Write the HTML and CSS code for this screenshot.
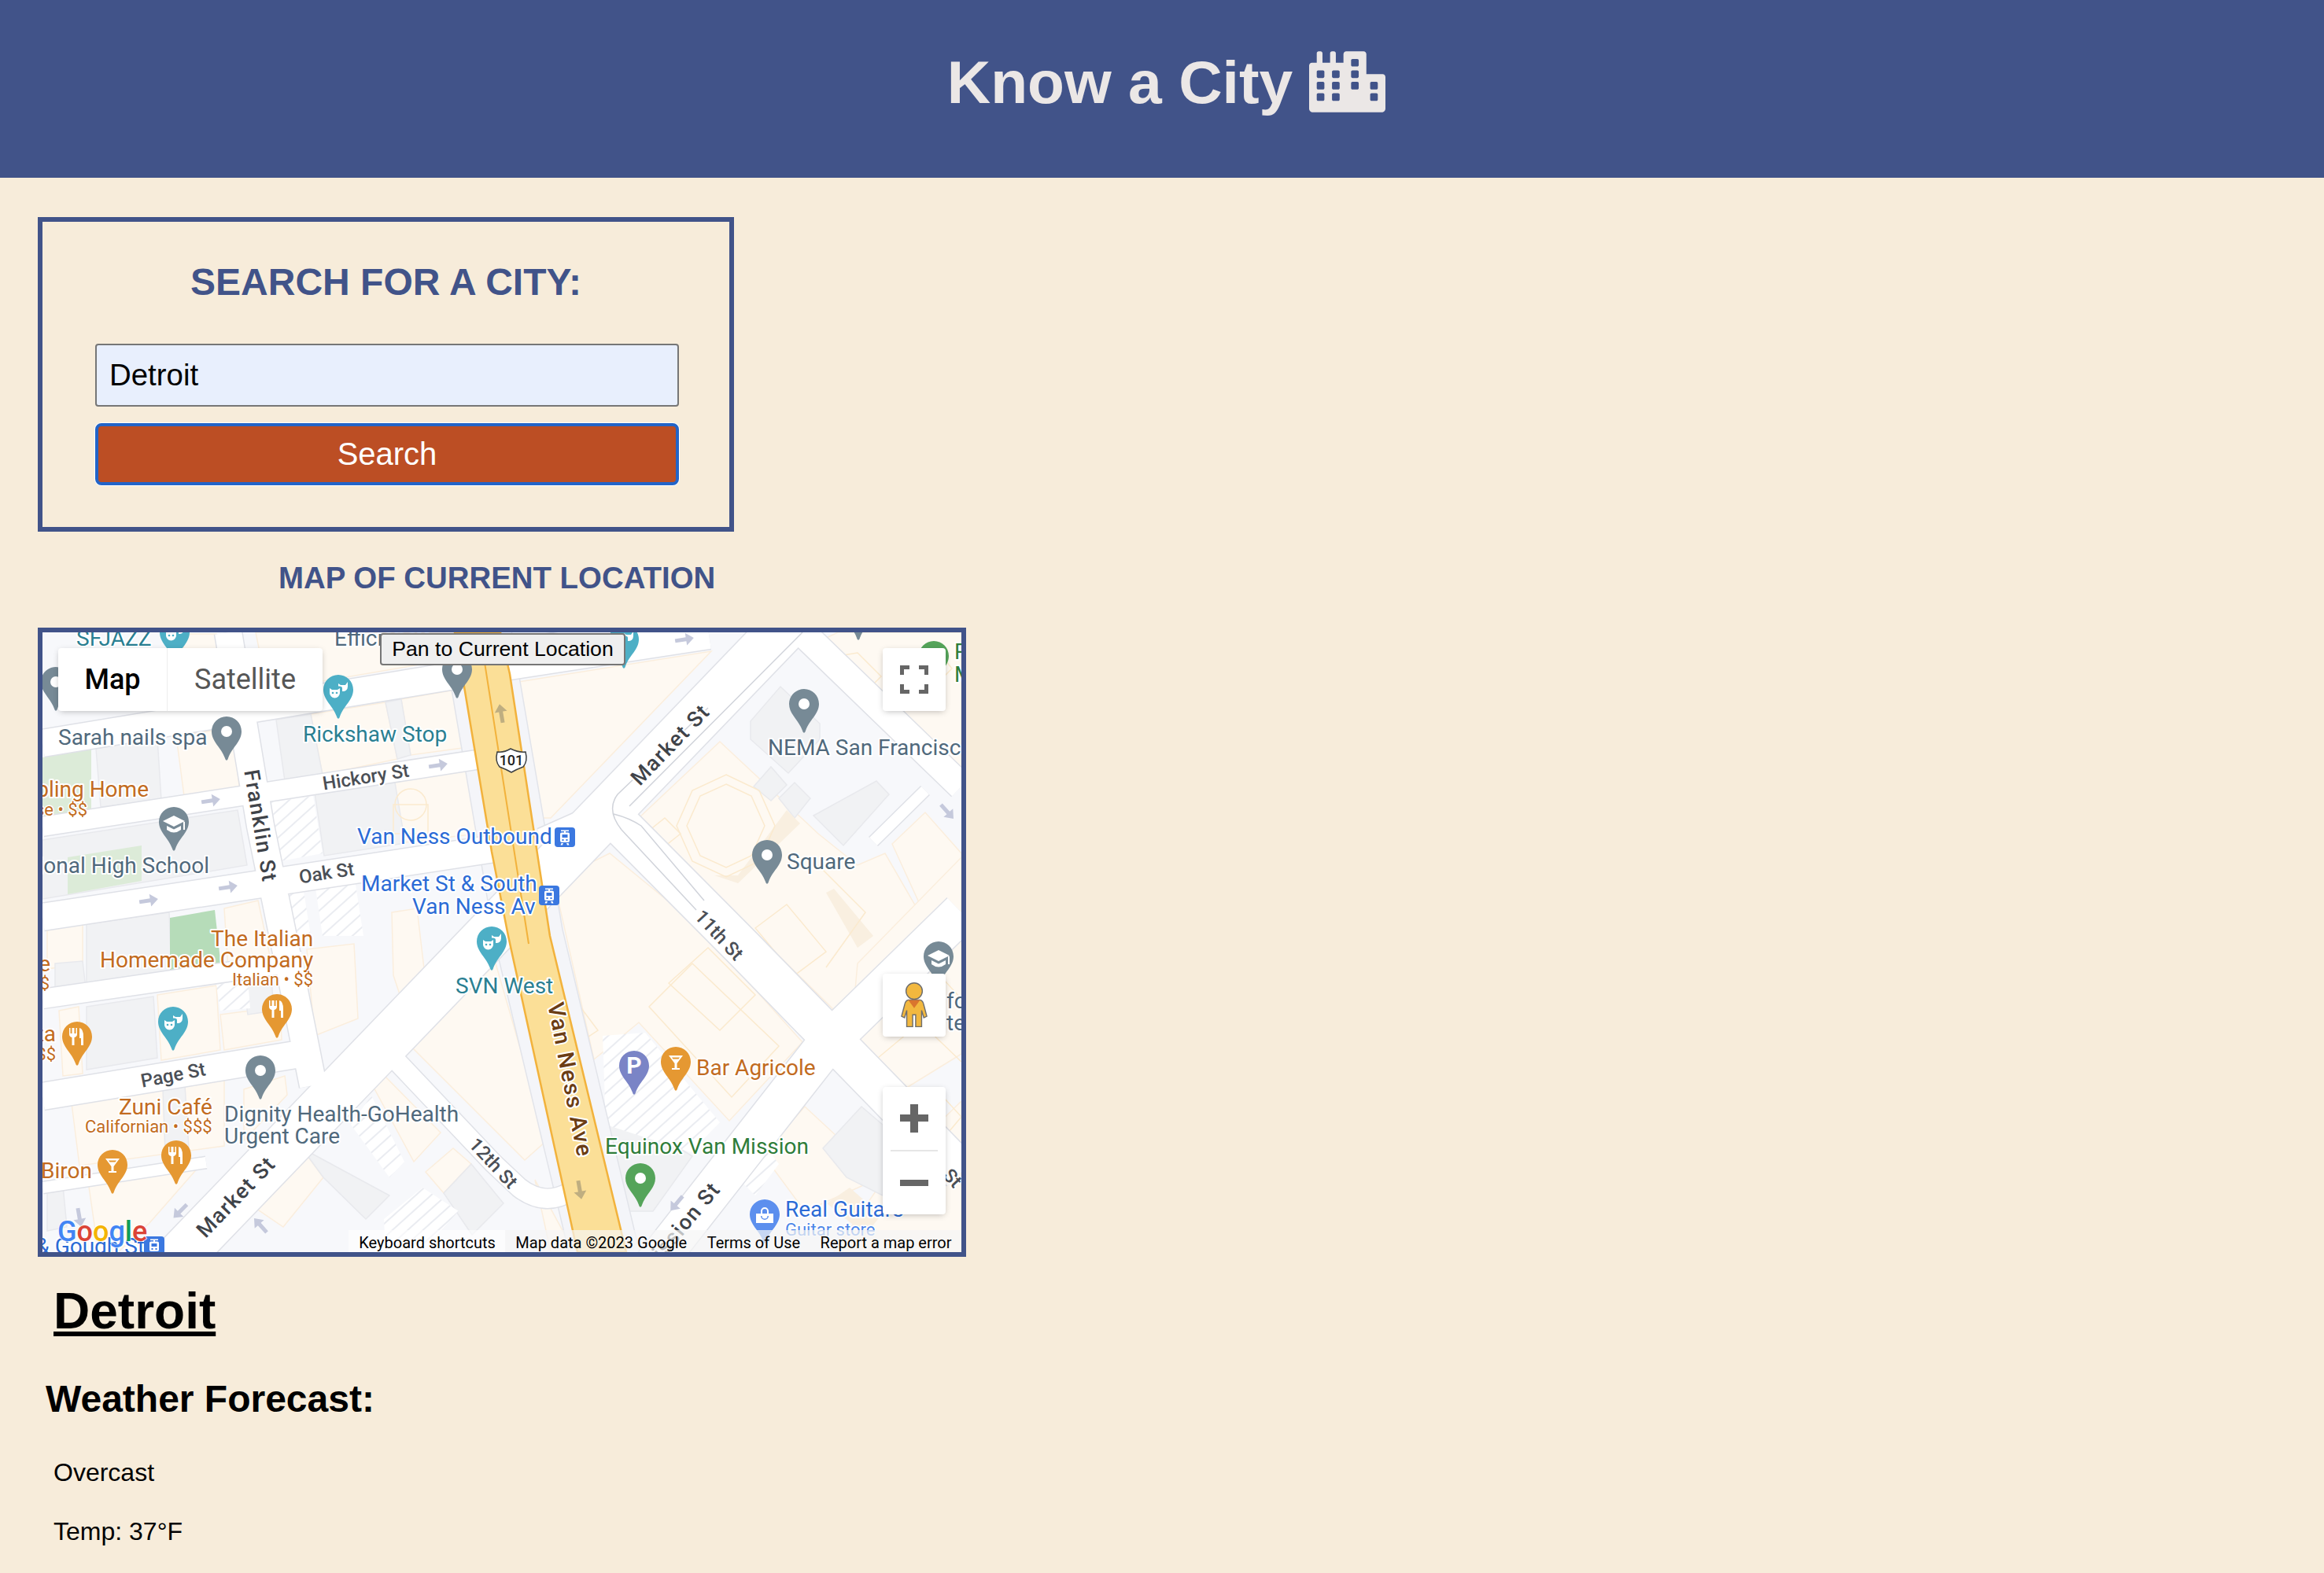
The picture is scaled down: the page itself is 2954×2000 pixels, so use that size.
FILE: index.html
```html
<!DOCTYPE html>
<html lang="en">
<head>
<meta charset="utf-8">
<title>Know a City</title>
<link rel="stylesheet" href="styles.css">
</head>
<body>
<header class="site-header">
  <h1 class="site-title">Know a City</h1>
  <svg class="city-icon" viewBox="0 0 640 512" aria-hidden="true"><path d="M616 192H480V24c0-13.26-10.74-24-24-24H312c-13.26 0-24 10.74-24 24v72h-64V16c0-8.84-7.16-16-16-16h-16c-8.84 0-16 7.16-16 16v80h-64V16c0-8.84-7.16-16-16-16H80c-8.84 0-16 7.16-16 16v80H24c-13.26 0-24 10.74-24 24v360c0 17.67 14.33 32 32 32h576c17.67 0 32-14.33 32-32V216c0-13.26-10.75-24-24-24zM128 404c0 6.63-5.37 12-12 12H76c-6.63 0-12-5.37-12-12v-40c0-6.63 5.37-12 12-12h40c6.63 0 12 5.37 12 12v40zm0-96c0 6.63-5.37 12-12 12H76c-6.63 0-12-5.37-12-12v-40c0-6.63 5.37-12 12-12h40c6.63 0 12 5.37 12 12v40zm0-96c0 6.63-5.37 12-12 12H76c-6.63 0-12-5.37-12-12v-40c0-6.63 5.37-12 12-12h40c6.63 0 12 5.37 12 12v40zm128 192c0 6.63-5.37 12-12 12h-40c-6.63 0-12-5.37-12-12v-40c0-6.63 5.37-12 12-12h40c6.63 0 12 5.37 12 12v40zm0-96c0 6.63-5.37 12-12 12h-40c-6.63 0-12-5.37-12-12v-40c0-6.63 5.37-12 12-12h40c6.63 0 12 5.37 12 12v40zm0-96c0 6.63-5.37 12-12 12h-40c-6.63 0-12-5.37-12-12v-40c0-6.63 5.37-12 12-12h40c6.63 0 12 5.37 12 12v40zm160 96c0 6.63-5.37 12-12 12h-40c-6.63 0-12-5.37-12-12v-40c0-6.63 5.37-12 12-12h40c6.63 0 12 5.37 12 12v40zm0-96c0 6.63-5.37 12-12 12h-40c-6.63 0-12-5.37-12-12v-40c0-6.63 5.37-12 12-12h40c6.63 0 12 5.37 12 12v40zm0-96c0 6.63-5.37 12-12 12h-40c-6.63 0-12-5.37-12-12V76c0-6.63 5.37-12 12-12h40c6.63 0 12 5.37 12 12v40zm160 288c0 6.63-5.37 12-12 12h-40c-6.63 0-12-5.37-12-12v-40c0-6.63 5.37-12 12-12h40c6.63 0 12 5.37 12 12v40zm0-96c0 6.63-5.37 12-12 12h-40c-6.63 0-12-5.37-12-12v-40c0-6.63 5.37-12 12-12h40c6.63 0 12 5.37 12 12v40z"/></svg>
</header>

<main class="content">
  <section class="search-box">
    <h2 class="search-title">SEARCH FOR A CITY:</h2>
    <form class="search-form">
      <input class="search-input" type="text" value="Detroit">
      <button class="search-button" type="button">Search</button>
    </form>
  </section>

  <h3 class="map-title">MAP OF CURRENT LOCATION</h3>

  <div class="map">
    <svg class="map-canvas" viewBox="54 804 1168 788" aria-label="Map of San Francisco around Van Ness Ave">
      <defs>
        <pattern id="stripes" width="13" height="13" patternUnits="userSpaceOnUse" patternTransform="rotate(-42)">
          <rect width="13" height="13" fill="#ffffff"/>
          <rect width="13" height="2" fill="#eaecf1"/>
        </pattern>
        <path id="pin-shape" d="M20 1C9.5 1 1 9.5 1 20C1 33 13 40 18 54C19 57.500 21 57.500 22 54C27 40 39 33 39 20C39 9.500 30.500 1 20 1Z"/>
        <g id="icon-dot"><circle cx="20" cy="20" r="7" fill="#fff"/></g>
        <g id="icon-cap" fill="#fff">
          <path d="M6 19L20 12L34 19L20 26Z"/>
          <path d="M11 25V30Q20 37 29 30V25L20 29.500Z"/>
          <rect x="32" y="20" width="2" height="10"/>
        </g>
        <g id="icon-masks">
          <path class="mask-face" d="M9 18L12 20H19L22 18V24A6.500 6.500 0 0 1 9 24Z"/>
          <path class="mask-face" d="M20 12L23 14H29L32 10V16A6 6 0 0 1 25 22V18Q25 15 20 15.500Z"/>
          <circle class="mask-eye" cx="13" cy="24" r="1.300"/>
          <circle class="mask-eye" cx="18" cy="24" r="1.300"/>
        </g>
        <g id="icon-fork" fill="#fff">
          <path d="M10 9V17Q10 20 13.500 21V31H16.500V21Q20 20 20 17V9H18.500V16H16.500V9H13.500V16H11.500V9Z"/>
          <path d="M23 9Q28 10 28 20V31H25V22H23Z"/>
        </g>
        <g id="icon-glass" fill="#fff">
          <path fill-rule="evenodd" d="M11 12H29L21.500 22V28H25V30H15V28H18.500V22ZM15 14.500L16.500 16.500H23.500L25 14.500Z"/>
        </g>
        <g id="icon-bag" fill="#fff">
          <path fill-rule="evenodd" d="M15 19V16A5 5 0 0 1 25 16V19H31V31H9V19ZM17 19H23V16A3 3 0 0 0 17 16ZM15 22A5 5 0 0 0 25 22H23.500A3.500 3.500 0 0 1 16.500 22Z"/>
        </g>
        <g id="arrow"><path d="M-12 -2.500H2V-8L12 0L2 8V2.500H-12Z"/></g>
        <g id="transit">
          <rect width="26" height="25" rx="4" fill="#3b78e0"/>
          <path fill="#fff" fill-rule="evenodd" d="M8 3.500H18V5H14V6.500H17Q19 6.500 19 8.500V17Q19 19 17 19H9Q7 19 7 17V8.500Q7 6.500 9 6.500H12V5H8ZM9.500 9V13H16.500V9ZM9.500 15V17H11.500V15ZM14.500 15V17H16.500V15ZM8.500 20H11L10 22.500H7.500ZM15 20H17.500L18.500 22.500H16Z"/>
        </g>
      </defs>

      <rect class="ground" x="54" y="804" width="1168" height="788"/>

      <!-- city blocks and buildings -->
      <g class="bldg-cream">
        <polygon points="230,806 275,806 280,860 240,860"/>
        <polygon points="325,804 590,804 598,834 340,878"/>
        <polygon points="224,936 297,925 304,1000 234,1012"/>
        <polygon points="395,908 490,893 505,965 410,985"/>
        <polygon points="510,889 590,875 595,950 522,960"/>
        <polygon points="490,992 605,975 607,1060 505,1072"/>
        <polygon points="60,1182 105,1175 105,1225 60,1232"/>
        <polygon points="285,1155 328,1145 345,1225 290,1232"/>
        <polygon points="75,1285 100,1280 105,1365 80,1368"/>
        <polygon points="200,1265 275,1253 280,1335 205,1348"/>
        <polygon points="280,1290 356,1280 358,1322 285,1335"/>
        <polygon points="390,1207 450,1200 455,1295 400,1317"/>
        <polygon points="498,1160 530,1155 540,1240 510,1270 500,1240"/>
        <polygon points="90,1395 285,1372 285,1457 101,1482"/>
        <polygon points="310,1385 362,1368 365,1392 310,1450"/>
        <polygon points="111,1495 254,1482 190,1555 150,1592 125,1592"/>
        <polygon points="472,1377 484,1363 560,1440 526,1477"/>
        <polygon points="319,1532 384,1460 411,1497 360,1560"/>
        <polygon points="541,1490 576,1460 599,1480 564,1517"/>
        <polygon points="522,1330 630,1225 695,1450 667,1475"/>
        <polygon points="659,867 904,828 700,1040 686,1040"/>
        <polygon points="704,1120 775,1085 885,1175 1020,1325 927,1425 812,1300 755,1347"/>
        <polygon points="812,1040 915,943 1040,1060 1090,1100 1125,1085 1180,1180 1061,1285"/>
        <polygon points="1134,1073 1176,1033 1222,1085 1222,1145 1183,1180"/>
        <polygon points="1038,817 1065,804 1222,804 1222,985 1160,920 1111,890"/>
        <polygon points="1090,1225 1222,1090 1222,1340 1141,1390 1080,1335"/>
        <polygon points="969,1467 1023,1407 1120,1497 1023,1540"/>
        <polygon points="1130,1490 1222,1400 1222,1592 1060,1592"/>
        <polygon points="700,1592 680,1500 730,1592"/>
      </g>
      <g class="bldg-gray">
        <polygon points="122,952 200,939 205,1017 128,1026"/>
        <polygon points="351,915 395,908 410,985 362,993"/>
        <polygon points="490,893 510,889 522,960 505,965"/>
        <polygon points="400,1008 502,995 515,1072 412,1088"/>
        <polygon points="54,1068 302,1030 314,1100 54,1143"/>
        <polygon points="70,1225 105,1222 110,1265 70,1270"/>
        <polygon points="110,1175 215,1160 218,1240 110,1250"/>
        <polygon points="110,1280 195,1267 200,1345 110,1360"/>
        <polygon points="310,1255 345,1245 348,1285 315,1290"/>
        <polygon points="207,1385 235,1380 240,1460 210,1465"/>
        <polygon points="60,1510 80,1508 85,1560 60,1565"/>
        <polygon points="384,1460 495,1520 465,1550 411,1497"/>
        <polygon points="564,1517 599,1480 640,1530 600,1570"/>
        <polygon points="772,1430 810,1427 880,1470 830,1540 790,1540"/>
        <polygon points="954,917 992,873 1042,920 1042,940 1002,983 954,940"/>
        <polygon points="1114,993 1130,1010 1072,1075 1034,1037"/>
        <polygon points="958,1000 980,975 1000,998 980,1018"/>
        <polygon points="990,1015 1010,995 1030,1015 1010,1040"/>
        <polygon points="1046,1460 1095,1407 1122,1430 1122,1520 1076,1497"/>
      </g>
      <g class="bldg-tan">
        <polygon points="1000,1030 1017,1047 938,1123 908,1113 938,1113"/>
        <polygon points="1050,1135 1060,1130 1110,1190 1090,1205"/>
        <polygon points="1051,1530 1080,1510 1120,1545 1100,1570"/>
      </g>
      <g class="park-pale">
        <polygon points="54,963 116,953 116,1029 54,1039"/>
        <polygon points="86,1090 180,1075 180,1120 86,1137"/>
      </g>
      <g class="park">
        <polygon points="216,1167 273,1157 281,1230 216,1241"/>
      </g>
      <g class="stripes">
        <polygon points="345,1020 398,1012 410,1085 356,1095"/>
        <polygon points="362,1130 385,1127 395,1190 372,1190"/>
        <polygon points="400,1122 450,1112 462,1190 410,1190"/>
        <polygon points="275,1252 315,1245 318,1282 280,1285"/>
        <polygon points="446,1430 472,1393 514,1477 495,1497"/>
        <polygon points="488,1550 537,1510 583,1540 537,1590 490,1590"/>
        <polygon points="766,1317 820,1313 915,1427 878,1465 770,1430"/>
        <polygon points="960,1440 990,1480 960,1520 930,1490"/>
      </g>
      <g class="outline">
        <polygon points="923,985 965,1005 985,1050 965,1095 923,1115 880,1095 860,1050 880,1005"/>
        <polygon points="923,997 955,1012 972,1050 955,1088 923,1103 890,1088 873,1050 890,1012"/>
        <polygon points="825,1280 880,1225 990,1330 930,1395"/>
        <polygon points="850,1250 900,1205 960,1265 915,1310"/>
        <polyline points="1040,1100 1100,1160 1050,1230"/>
        <polyline points="1140,1290 1190,1235 1222,1270"/>
        <polyline points="1110,1350 1170,1300 1222,1350"/>
        <polygon points="1060,835 1090,830 1120,860 1100,880"/>
        <polygon points="960,1180 1000,1150 1050,1210 1010,1240"/>
        <polygon points="700,1290 730,1270 760,1310 730,1330"/>
        <polygon points="820,1060 845,1040 865,1060 840,1080"/>
        <polygon points="1160,850 1190,825 1210,850 1180,880"/>
        <polygon points="1150,1420 1190,1385 1222,1420 1180,1470"/>
        <polygon points="500,1023 544,1023 544,1060 500,1060"/>
        <circle cx="522" cy="1023" r="20"/>
      </g>

      <!-- Van Ness sidewalks -->
      <path class="van-walk-edge" d="M606 804L672 1190L768 1592"/>
      <path class="van-walk" d="M606 804L672 1190L768 1592"/>

      <!-- streets -->
      <g class="casing">
        <path class="w14" d="M54 1510L262 1478M1110 1070L1176 1005"/>
        <path class="w24" d="M54 1051L612 965M54 1270L385 1222M505 1350L627 1479L660 1510Q692 1535 725 1515"/>
        <path class="w34" d="M54 945L590 857M54 1166L635 1078M690 1070L780 1030M54 1394L400 1337M290 804L331 1050L372 1250L398 1380M1005 790L1222 1000"/>
        <path class="w50" d="M640 840L900 800M790 1050L946 1207L1222 1490M830 1610L1053 1325L1222 1160"/>
        <path class="w60" d="M200 1627L1050 743"/>
      </g>
      <g class="road">
        <path class="w14" d="M54 1510L262 1478M1110 1070L1176 1005"/>
        <path class="w24" d="M54 1051L612 965M54 1270L385 1222M505 1350L627 1479L660 1510Q692 1535 725 1515"/>
        <path class="w34" d="M54 945L590 857M54 1166L635 1078M690 1070L780 1030M54 1394L400 1337M290 804L331 1050L372 1250L398 1380M1005 790L1222 1000"/>
        <path class="w50" d="M640 840L900 800M790 1050L946 1207L1222 1490M830 1610L1053 1325L1222 1160"/>
        <path class="w60" d="M200 1627L1050 743"/>
      </g>
      <path class="tram" d="M900 900L785 1010Q770 1030 790 1055L885 1157M780 1035Q800 1040 815 1050L895 1145M1020 804L800 1025"/>

      <!-- Van Ness Ave -->
      <polygon class="highway" points="578,804 590,873 625,1083 646,1190 734,1592 796,1592 789,1563 699,1190 648,857 636,804"/>
      <path class="highway-line" d="M610 804L672 1200"/>

      <!-- one-way arrows -->
      <g class="arrows">
        <use href="#arrow" transform="translate(268 1018) rotate(-9)"/>
        <use href="#arrow" transform="translate(557 973) rotate(-9)"/>
        <use href="#arrow" transform="translate(290 1128) rotate(-9)"/>
        <use href="#arrow" transform="translate(189 1145) rotate(-9)"/>
        <use href="#arrow" transform="translate(870 813) rotate(-9)"/>
        <use href="#arrow" transform="translate(1204 1032) rotate(48)"/>
        <use href="#arrow" transform="translate(229 1540) rotate(135)"/>
        <use href="#arrow" transform="translate(331 1558) rotate(-132)"/>
        <use href="#arrow" transform="translate(101 1548) rotate(80)"/>
        <use href="#arrow" transform="translate(860 1530) rotate(130)"/>
      </g>
      <g class="arrows-road">
        <use href="#arrow" transform="translate(737 1513) rotate(80)"/>
        <use href="#arrow" transform="translate(637 907) rotate(-100)"/>
      </g>

      <!-- US 101 shield -->
      <g class="shield" transform="translate(629 951)">
        <path class="shield-outline" d="M3 5Q12 6 20 1Q30 6 39 5Q42 17 36 24Q28 27 21 31Q14 27 6 24Q0 17 3 5Z"/>
        <text class="shield-text" x="21" y="22">101</text>
      </g>

      <!-- street labels -->
      <text class="street" transform="rotate(-9 465 988)" x="465" y="988">Hickory St</text>
      <text class="street" transform="rotate(-9 415 1110)" x="415" y="1110">Oak St</text>
      <text class="street" transform="rotate(-11 220 1367)" x="220" y="1367">Page St</text>
      <text class="street street-large" transform="rotate(80.500 331 1050)" x="331" y="1050">Franklin St</text>
      <text class="street street-large" transform="rotate(-46 852 947)" x="852" y="947">Market St</text>
      <text class="street street-large" transform="rotate(-46 300 1522)" x="300" y="1522">Market St</text>
      <text class="street" transform="rotate(47 914 1189)" x="914" y="1189">11th St</text>
      <text class="street" transform="rotate(47 627 1479)" x="627" y="1479">12th St</text>
      <text class="street" transform="rotate(47 1192 1478)" x="1192" y="1478">10th St</text>
      <text class="street street-large street-end" transform="rotate(-50 910 1507)" x="910" y="1507">Mission St</text>
      <text class="street street-major" transform="rotate(79 725 1373)" x="725" y="1373">Van Ness Ave</text>

      <!-- place labels -->
      <text class="poi teal" x="97" y="821">SFJAZZ</text>
      <text class="poi gray" x="425" y="821">Efficiency</text>
      <text class="poi gray" x="74" y="947">Sarah nails spa</text>
      <text class="poi teal" x="385" y="943">Rickshaw Stop</text>
      <text class="poi orange end" x="189" y="1013">Dumpling Home</text>
      <text class="poi-sub orange end" x="111" y="1037">Chinese • $$</text>
      <text class="poi gray end" x="266" y="1110">International High School</text>
      <text class="poi blue" x="454" y="1073">Van Ness Outbound</text>
      <text class="poi blue" x="459" y="1133">Market St &amp; South</text>
      <text class="poi blue" x="524" y="1162">Van Ness Av</text>
      <text class="poi orange" x="268" y="1203">The Italian</text>
      <text class="poi orange" x="127" y="1230">Homemade Company</text>
      <text class="poi-sub orange" x="295" y="1253">Italian • $$</text>
      <text class="poi orange end" x="64" y="1235">Cafe</text>
      <text class="poi-sub orange end" x="63" y="1258">$$</text>
      <text class="poi orange end" x="71" y="1324">Pizza</text>
      <text class="poi-sub orange end" x="71" y="1348">$$</text>
      <text class="poi orange" x="151" y="1417">Zuni Café</text>
      <text class="poi-sub orange" x="108" y="1440">Californian • $$$</text>
      <text class="poi gray" x="285" y="1426">Dignity Health-GoHealth</text>
      <text class="poi gray" x="285" y="1454">Urgent Care</text>
      <text class="poi orange end" x="117" y="1498">Biron</text>
      <text class="poi teal" x="579" y="1263">SVN West</text>
      <text class="poi orange" x="885" y="1367">Bar Agricole</text>
      <text class="poi green" x="769" y="1467">Equinox Van Mission</text>
      <text class="poi blue" x="998" y="1547">Real Guitars</text>
      <text class="poi-sub blue-light" x="998" y="1571">Guitar store</text>
      <text class="poi gray" x="976" y="960">NEMA San Francisco</text>
      <text class="poi gray" x="1000" y="1105">Square</text>
      <text class="poi gray" x="1203" y="1282">fo</text>
      <text class="poi gray" x="1203" y="1310">te</text>
      <text class="poi green" x="1213" y="838">R</text>
      <text class="poi green" x="1213" y="867">M</text>
      <text class="poi blue end" x="184" y="1594">&amp; Gough St</text>

      <!-- pins: each origin is tip minus (20, 56) -->
      <g class="pin-gray">
        <g transform="translate(268 910)"><use href="#pin-shape"/><use href="#icon-dot"/></g>
        <g transform="translate(51 847)"><use href="#pin-shape"/><use href="#icon-dot"/></g>
        <g transform="translate(561 831)"><use href="#pin-shape"/><use href="#icon-dot"/></g>
        <g transform="translate(1002 875)"><use href="#pin-shape"/><use href="#icon-dot"/></g>
        <g transform="translate(955 1067)"><use href="#pin-shape"/><use href="#icon-dot"/></g>
        <g transform="translate(1071 757)"><use href="#pin-shape"/><use href="#icon-dot"/></g>
        <g transform="translate(311 1341)"><use href="#pin-shape"/><use href="#icon-dot"/></g>
        <g transform="translate(201 1025)"><use href="#pin-shape"/><use href="#icon-cap"/></g>
        <g transform="translate(1173 1196)"><use href="#pin-shape"/><use href="#icon-cap"/></g>
      </g>
      <g class="pin-teal">
        <g transform="translate(202 784)"><use href="#pin-shape"/><use href="#icon-masks"/></g>
        <g transform="translate(410 857)"><use href="#pin-shape"/><use href="#icon-masks"/></g>
        <g transform="translate(773 793)"><use href="#pin-shape"/><use href="#icon-masks"/></g>
        <g transform="translate(200 1279)"><use href="#pin-shape"/><use href="#icon-masks"/></g>
        <g transform="translate(605 1177)"><use href="#pin-shape"/><use href="#icon-masks"/></g>
      </g>
      <g class="pin-orange">
        <g transform="translate(332 1263)"><use href="#pin-shape"/><use href="#icon-fork"/></g>
        <g transform="translate(78 1298)"><use href="#pin-shape"/><use href="#icon-fork"/></g>
        <g transform="translate(204 1449)"><use href="#pin-shape"/><use href="#icon-fork"/></g>
        <g transform="translate(123 1461)"><use href="#pin-shape"/><use href="#icon-glass"/></g>
        <g transform="translate(839 1330)"><use href="#pin-shape"/><use href="#icon-glass"/></g>
      </g>
      <g class="pin-purple">
        <g transform="translate(786 1335)"><use href="#pin-shape"/><text class="pin-letter" x="20" y="30">P</text></g>
      </g>
      <g class="pin-green">
        <g transform="translate(794 1478)"><use href="#pin-shape"/><use href="#icon-dot"/></g>
        <g transform="translate(1167 814)"><use href="#pin-shape"/><use href="#icon-dot"/></g>
      </g>
      <g class="pin-blue">
        <g transform="translate(952 1524)"><use href="#pin-shape"/><use href="#icon-bag"/></g>
      </g>

      <use href="#transit" transform="translate(705 1052)"/>
      <use href="#transit" transform="translate(685 1126)"/>
      <use href="#transit" transform="translate(183 1572)"/>

      <text class="google-logo" x="73" y="1578"><tspan class="g-blue">G</tspan><tspan class="g-red">o</tspan><tspan class="g-yellow">o</tspan><tspan class="g-blue">g</tspan><tspan class="g-green">l</tspan><tspan class="g-red">e</tspan></text>
    </svg>

    <div class="map-types">
      <div class="map-type map-type-active">Map</div>
      <div class="map-type map-type-sat">Satellite</div>
    </div>
    <button class="pan-button" type="button">Pan to Current Location</button>
    <div class="map-ctl fullscreen">
      <svg class="ctl-icon" viewBox="0 0 36 36"><path d="M0 12V0H12V5H5V12ZM24 0H36V12H31V5H24ZM36 24V36H24V31H31V24ZM12 36H0V24H5V31H12Z"/></svg>
    </div>
    <div class="map-ctl pegman">
      <svg class="pegman-icon" viewBox="0 0 36 62">
        <circle class="peg-body" cx="18" cy="12" r="11"/>
        <path class="peg-body" d="M10 24H26Q30 25 31 31L35 46L31 48L28 38V60H20V44H16V60H8V38L5 48L1 46L5 31Q6 25 10 24Z"/>
        <path class="peg-collar" d="M10 24H26L18 35Z"/>
      </svg>
    </div>
    <div class="map-ctl zoom-ctl">
      <div class="zoom-btn"><svg class="ctl-icon" viewBox="0 0 36 36"><path d="M13 0H23V13H36V22H23V36H13V22H0V13H13Z"/></svg></div>
      <div class="zoom-divider"></div>
      <div class="zoom-btn"><svg class="ctl-icon" viewBox="0 0 36 36"><rect y="14" width="36" height="8"/></svg></div>
    </div>
    <div class="attribution">
      <span class="attr-item attr-keys">Keyboard shortcuts</span>
      <span class="attr-item">Map data ©2023 Google</span>
      <span class="attr-item">Terms of Use</span>
      <span class="attr-item">Report a map error</span>
    </div>
  </div>

  <h2 class="city-name">Detroit</h2>
  <h3 class="forecast-title">Weather Forecast:</h3>
  <p class="forecast-line">Overcast</p>
  <p class="forecast-line forecast-temp">Temp: 37°F</p>
</main>
</body>
</html>
```
FILE: styles.css
```css
* { box-sizing: border-box; }
html, body { margin: 0; padding: 0; }
body {
  background: #f7ecda;
  color: #000;
  font-family: "Liberation Sans", Arial, sans-serif;
  overflow-x: hidden;
}

.site-header {
  height: 226px;
  background: #415389;
  display: flex;
  align-items: center;
  justify-content: center;
  gap: 21px;
  padding: 0 0 18px 11px;
}
.site-title {
  margin: 0;
  font-size: 76.8px;
  line-height: 88px;
  font-weight: 700;
  color: #ebe7e6;
}
.city-icon { width: 97px; height: 78px; fill: #ebe7e6; }

.content { padding-left: 48px; }

.search-box {
  width: 885px;
  height: 400px;
  margin-top: 50px;
  border: 6px solid #415389;
  padding-top: 49px;
}
.search-title {
  margin: 0;
  font-size: 48px;
  line-height: 56px;
  font-weight: 700;
  text-align: center;
  color: #415389;
}
.search-form {
  width: 742px;
  margin: 50px 0 0 67px;
  display: flex;
  flex-direction: column;
  gap: 21px;
}
.search-input {
  display: block;
  width: 100%;
  height: 80px;
  padding: 0 16px;
  border: 2px solid #767676;
  border-radius: 4px;
  background: #e8effd;
  color: #000;
  font: 38.4px "Liberation Sans", Arial, sans-serif;
}
.search-button {
  display: block;
  width: 742px;
  height: 79px;
  padding: 0;
  border: 4px solid #2264c8;
  border-radius: 8px;
  box-shadow: 0 0 0 1px #fff;
  background: #bc4e24;
  color: #fff;
  font: 40px "Liberation Sans", Arial, sans-serif;
}

.map-title {
  margin: 36px 0 40px 306px;
  font-size: 38.4px;
  line-height: 46px;
  font-weight: 700;
  color: #415389;
}

.map {
  position: relative;
  width: 1180px;
  height: 800px;
  border: 6px solid #415389;
  overflow: hidden;
  background: #fff;
}
.map-canvas { display: block; width: 1168px; height: 788px; }

/* map painting */
.ground { fill: #f7f8fb; }
.bldg-cream polygon { fill: #fef9f2; stroke: #fbeedd; stroke-width: 1.500; }
.bldg-gray polygon { fill: #f1f2f4; stroke: #e8e9ed; stroke-width: 1.500; }
.bldg-tan polygon { fill: #f9efe0; }
.park polygon { fill: #b6dcb9; }
.park-pale polygon { fill: #dcebd8; }
.stripes polygon { fill: url(#stripes); }
.outline > * { fill: none; stroke: #fbeace; stroke-width: 1.500; }
.van-walk { fill: none; stroke: #f4f5f9; stroke-width: 86; }
.van-walk-edge { fill: none; stroke: #e2e4ea; stroke-width: 89; }

.casing path, .road path { fill: none; stroke-linejoin: round; }
.casing path { stroke: #dfe1e7; }
.road path { stroke: #ffffff; }
.casing .w14 { stroke-width: 17; }
.road .w14 { stroke-width: 14; }
.casing .w24 { stroke-width: 27; }
.road .w24 { stroke-width: 24; }
.casing .w34 { stroke-width: 37; }
.road .w34 { stroke-width: 34; }
.casing .w50 { stroke-width: 53; }
.road .w50 { stroke-width: 50; }
.casing .w60 { stroke-width: 63; }
.road .w60 { stroke-width: 60; }
.tram { fill: none; stroke: #d0d3da; stroke-width: 1.500; }

.highway { fill: #fbdf97; stroke: #f2b23c; stroke-width: 2.500; }
.highway-line { fill: none; stroke: #f2b23c; stroke-width: 2; }
.arrows { fill: #c5c9dc; }
.arrows-road { fill: #bfae80; }
.shield-outline { fill: #fff; stroke: #3c4043; stroke-width: 1.500; }
.shield-text { font: 500 18px Roboto, sans-serif; fill: #222; text-anchor: middle; }

.street, .poi, .poi-sub {
  font-family: Roboto, sans-serif;
  paint-order: stroke;
  stroke: #fff;
  stroke-linejoin: round;
}
.street {
  font-size: 24px;
  font-weight: 500;
  fill: #4b4f56;
  stroke-width: 4px;
  text-anchor: middle;
  dominant-baseline: central;
}
.street-large { font-size: 27px; letter-spacing: 1.500px; fill: #3f4349; }
.street-major { font-size: 29px; letter-spacing: 1.800px; font-weight: 500; fill: #6b3d14; }
.street-end { text-anchor: end; }
.poi { font-size: 28px; stroke-width: 4px; }
.poi-sub { font-size: 22px; stroke-width: 3px; }
.end { text-anchor: end; }
.teal { fill: #2a7f92; }
.gray { fill: #50697c; }
.orange { fill: #c26b20; }
.blue { fill: #2b6bd6; }
.blue-light { fill: #4d86e8; }
.green { fill: #2f7d3a; }

.pin-gray { fill: #778a96; }
.pin-teal { fill: #4dafc6; }
.pin-orange { fill: #e59832; }
.pin-purple { fill: #7a84c6; }
.pin-green { fill: #55a45a; }
.pin-blue { fill: #5c8fee; }
.pin-letter { font: 700 30px Roboto, sans-serif; fill: #fff; text-anchor: middle; }
.mask-face { fill: #fff; }
.mask-eye { fill: #4dafc6; }

.google-logo {
  font-family: Roboto, sans-serif;
  font-size: 36px;
  font-weight: 500;
  paint-order: stroke;
  stroke: rgba(255,255,255,.7);
  stroke-width: 2px;
}
.g-blue { fill: #4285f4; }
.g-red { fill: #db4437; }
.g-yellow { fill: #f4b400; }
.g-green { fill: #0f9d58; }

/* map controls */
.map-types {
  position: absolute;
  left: 20px;
  top: 20px;
  height: 80px;
  display: flex;
  background: #fff;
  border-radius: 4px;
  box-shadow: 0 2px 8px -2px rgba(0,0,0,.3);
  font-family: Roboto, sans-serif;
  font-size: 36px;
}
.map-type { display: flex; align-items: center; justify-content: center; }
.map-type-active { width: 139px; color: #000; font-weight: 500; border-right: 1px solid #eee; }
.map-type-sat { width: 197px; color: #565656; }
.pan-button {
  position: absolute;
  left: 429px;
  top: 1px;
  width: 312px;
  height: 41px;
  padding: 0;
  border: 2px solid #767676;
  border-radius: 4px;
  background: #efefef;
  color: #000;
  font: 26.67px "Liberation Sans", Arial, sans-serif;
}
.map-ctl {
  position: absolute;
  left: 1068px;
  width: 80px;
  background: #fff;
  border-radius: 4px;
  box-shadow: 0 2px 8px -2px rgba(0,0,0,.3);
  display: flex;
  align-items: center;
  justify-content: center;
}
.fullscreen { top: 20px; height: 80px; }
.pegman { top: 434px; height: 80px; }
.zoom-ctl { top: 578px; height: 162px; flex-direction: column; }
.zoom-btn { height: 80px; width: 100%; display: flex; align-items: center; justify-content: center; }
.zoom-divider { width: 60px; height: 2px; background: #e6e6e6; }
.ctl-icon { width: 36px; height: 36px; fill: #666; }
.pegman-icon { width: 34px; height: 60px; }
.peg-body { fill: #f2b83f; stroke: #6e6e6e; stroke-width: 1.500; }
.peg-collar { fill: #d9752e; }

.attribution {
  position: absolute;
  right: 0;
  bottom: 0;
  height: 28px;
  display: flex;
  font-family: Roboto, sans-serif;
  font-size: 20px;
  line-height: 32px;
  color: #000;
  overflow: hidden;
}
.attr-item { padding: 0 12.500px 0 13px; background: rgba(245,245,245,.7); white-space: nowrap; }
.attr-keys { background: rgba(255,255,255,.6); }

/* results */
.city-name {
  margin: 32px 0 47px 20px;
  font-size: 64px;
  line-height: 74px;
  font-weight: 700;
  text-decoration: underline;
}
.forecast-title {
  margin: 0 0 47px 10px;
  font-size: 48px;
  line-height: 56px;
  font-weight: 700;
}
.forecast-line {
  margin: 0 0 0 20px;
  font-size: 32px;
  line-height: 37px;
}
.forecast-temp { margin-top: 38px; }
```
